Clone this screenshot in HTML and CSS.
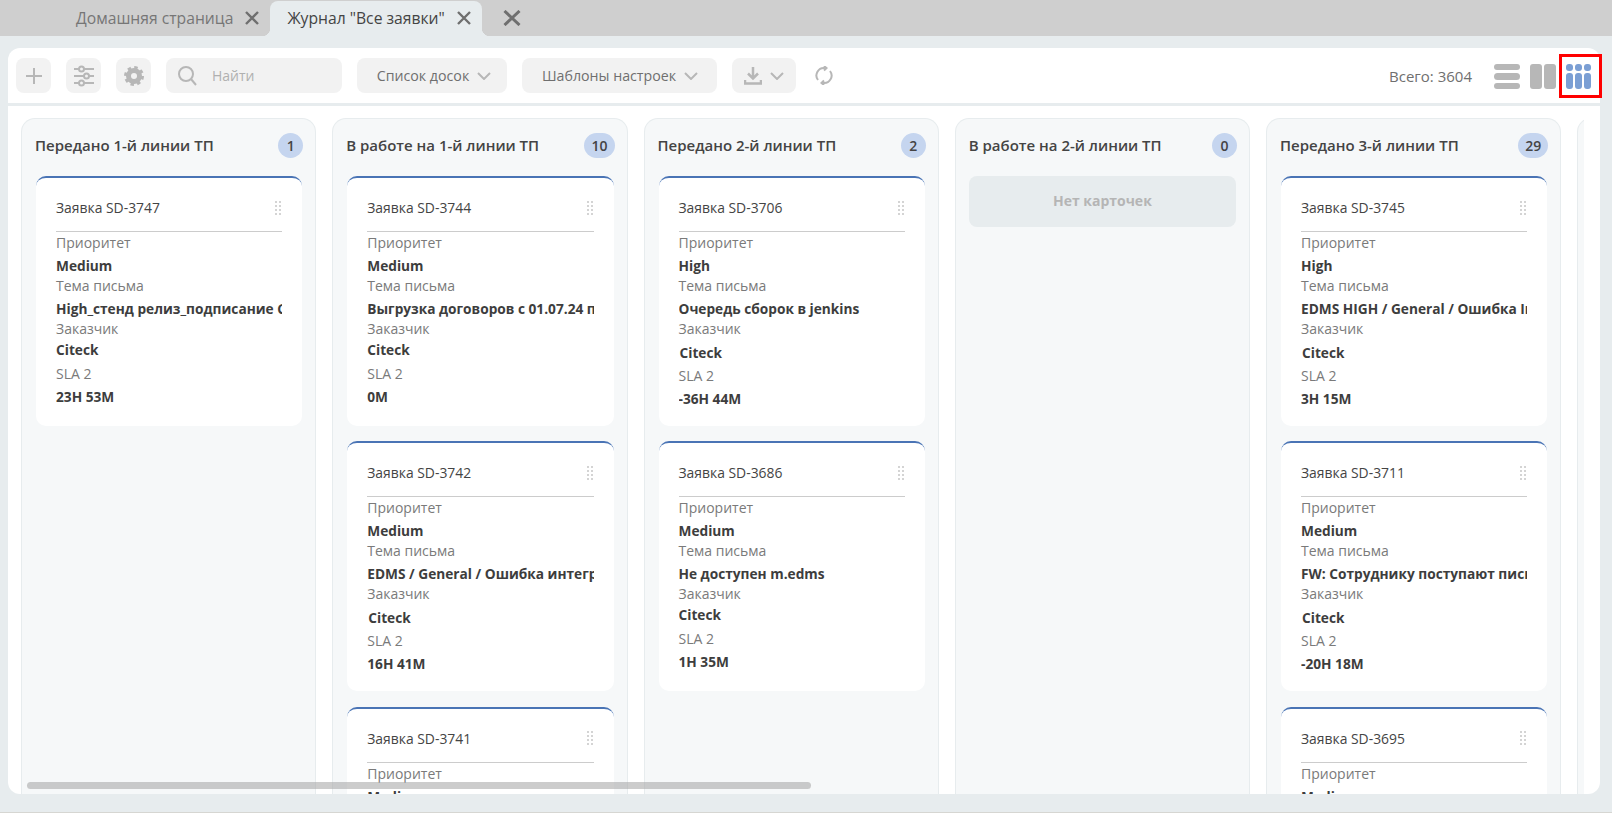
FILE: index.html
```html
<!DOCTYPE html>
<html lang="en">
<head>
    <meta charset="UTF-8">
    <title>Журнал "Все заявки"</title>
    <link rel="stylesheet" href="styles.css">
</head>
<body>
    <!-- Tabs -->
    <div class="tabs">
        <div class="tab">
            <span>Домашняя страница</span>
            <svg class="tab-x" viewBox="0 0 14 14"><path d="M1 1l12 12M13 1L1 13"/></svg>
        </div>
        <div class="tab tab-active">
            <span>Журнал "Все заявки"</span>
            <svg class="tab-x" viewBox="0 0 14 14"><path d="M1 1l12 12M13 1L1 13"/></svg>
        </div>
        <svg class="tabs-close" viewBox="0 0 18 16"><path d="M1.500 1l15 14M16.500 1l-15 14"/></svg>
    </div>

    <div class="panel">
        <!-- Toolbar -->
        <div class="toolbar">
            <button class="tool-btn">
                <svg class="ico" width="18" height="18" viewBox="0 0 18 18"><path d="M9 1v16M1 9h16"/></svg>
            </button>
            <button class="tool-btn">
                <svg class="ico" width="20" height="22" viewBox="0 0 20 22">
                    <path d="M0 4h5M10 4h10M0 11h10M15 11h5M0 18h5M10 18h10"/>
                    <circle cx="7.500" cy="4" r="2.500"/><circle cx="12.500" cy="11" r="2.500"/><circle cx="7.500" cy="18" r="2.500"/>
                </svg>
            </button>
            <button class="tool-btn">
                <svg width="20" height="20" viewBox="0 0 20 20">
                    <circle cx="10" cy="10" r="5.500" fill="none" stroke="#b7b7b7" stroke-width="5"/>
                    <circle cx="10" cy="10" r="8.500" fill="none" stroke="#b7b7b7" stroke-width="3" stroke-dasharray="3.400 3.270"/>
                </svg>
            </button>
            <div class="search">
                <svg class="ico" width="19" height="20" viewBox="0 0 19 20"><circle cx="8" cy="8" r="7"/><path d="M13 13l5 6"/></svg>
                <span>Найти</span>
            </div>
            <button class="tool-btn tool-select select-boards">
                Список досок
                <svg class="ico" width="14" height="8" viewBox="0 0 14 8"><path d="M1 1l6 6 6-6"/></svg>
            </button>
            <button class="tool-btn tool-select select-tpl">
                Шаблоны настроек
                <svg class="ico" width="14" height="8" viewBox="0 0 14 8"><path d="M1 1l6 6 6-6"/></svg>
            </button>
            <button class="tool-btn tool-select select-export">
                <svg class="ico ico-thick" width="18" height="19" viewBox="0 0 18 19"><path d="M9 1v11M4 7.500l5 5 5-5M1 14v3.500h16V14"/></svg>
                <svg class="ico" width="14" height="8" viewBox="0 0 14 8"><path d="M1 1l6 6 6-6"/></svg>
            </button>
            <svg class="ico refresh" width="18" height="19" viewBox="0 0 18 19">
                <path d="M3 14a7.500 7.500 0 0 1 7-12M15 5a7.500 7.500 0 0 1-7 12"/>
                <path d="M9 0l2.500 2L9 4.500M9 14.500L6.500 17 9 19"/>
            </svg>
            <div class="total">Всего: 3604</div>
            <div class="views">
                <div class="view view-list"><i></i><i></i><i></i></div>
                <div class="view view-two"><i></i><i></i></div>
                <div class="view view-three">
                    <i></i><i></i><i></i><i></i><i></i><i></i>
                    <div class="view-mark"></div>
                </div>
            </div>
        </div>

        <!-- Board -->
        <div class="board">
            <div class="column">
                <div class="column-head"><span>Передано 1-й линии ТП</span><b class="count">1</b></div>
                <div class="card">
                    <div class="card-head"><span>Заявка SD-3747</span><div class="drag"></div></div>
                    <div class="field">Приоритет</div><div class="value">Medium</div>
                    <div class="field">Тема письма</div><div class="value">High_стенд релиз_подписание Citeck</div>
                    <div class="field">Заказчик</div><div class="value value-tight">Citeck</div>
                    <div class="field field-sla">SLA 2</div><div class="value">23H 53M</div>
                </div>
            </div>

            <div class="column">
                <div class="column-head"><span>В работе на 1-й линии ТП</span><b class="count">10</b></div>
                <div class="card">
                    <div class="card-head"><span>Заявка SD-3744</span><div class="drag"></div></div>
                    <div class="field">Приоритет</div><div class="value">Medium</div>
                    <div class="field">Тема письма</div><div class="value">Выгрузка договоров с 01.07.24 по</div>
                    <div class="field">Заказчик</div><div class="value value-tight">Citeck</div>
                    <div class="field field-sla">SLA 2</div><div class="value">0M</div>
                </div>
                <div class="card">
                    <div class="card-head"><span>Заявка SD-3742</span><div class="drag"></div></div>
                    <div class="field">Приоритет</div><div class="value">Medium</div>
                    <div class="field">Тема письма</div><div class="value">EDMS / General / Ошибка интеграции</div>
                    <div class="field">Заказчик</div><div class="value value-low">Citeck</div>
                    <div class="field field-sla">SLA 2</div><div class="value">16H 41M</div>
                </div>
                <div class="card">
                    <div class="card-head"><span>Заявка SD-3741</span><div class="drag"></div></div>
                    <div class="field">Приоритет</div><div class="value">Medium</div>
                </div>
            </div>

            <div class="column">
                <div class="column-head"><span>Передано 2-й линии ТП</span><b class="count">2</b></div>
                <div class="card">
                    <div class="card-head"><span>Заявка SD-3706</span><div class="drag"></div></div>
                    <div class="field">Приоритет</div><div class="value">High</div>
                    <div class="field">Тема письма</div><div class="value">Очередь сборок в jenkins</div>
                    <div class="field">Заказчик</div><div class="value value-low">Citeck</div>
                    <div class="field field-sla">SLA 2</div><div class="value">-36H 44M</div>
                </div>
                <div class="card">
                    <div class="card-head"><span>Заявка SD-3686</span><div class="drag"></div></div>
                    <div class="field">Приоритет</div><div class="value">Medium</div>
                    <div class="field">Тема письма</div><div class="value">Не доступен m.edms</div>
                    <div class="field">Заказчик</div><div class="value value-tight">Citeck</div>
                    <div class="field field-sla">SLA 2</div><div class="value">1H 35M</div>
                </div>
            </div>

            <div class="column">
                <div class="column-head"><span>В работе на 2-й линии ТП</span><b class="count">0</b></div>
                <div class="no-cards">Нет карточек</div>
            </div>

            <div class="column">
                <div class="column-head"><span>Передано 3-й линии ТП</span><b class="count">29</b></div>
                <div class="card">
                    <div class="card-head"><span>Заявка SD-3745</span><div class="drag"></div></div>
                    <div class="field">Приоритет</div><div class="value">High</div>
                    <div class="field">Тема письма</div><div class="value">EDMS HIGH / General / Ошибка Integration</div>
                    <div class="field">Заказчик</div><div class="value value-low">Citeck</div>
                    <div class="field field-sla">SLA 2</div><div class="value">3H 15M</div>
                </div>
                <div class="card">
                    <div class="card-head"><span>Заявка SD-3711</span><div class="drag"></div></div>
                    <div class="field">Приоритет</div><div class="value">Medium</div>
                    <div class="field">Тема письма</div><div class="value">FW: Сотруднику поступают письма</div>
                    <div class="field">Заказчик</div><div class="value value-low">Citeck</div>
                    <div class="field field-sla">SLA 2</div><div class="value">-20H 18M</div>
                </div>
                <div class="card">
                    <div class="card-head"><span>Заявка SD-3695</span><div class="drag"></div></div>
                    <div class="field">Приоритет</div><div class="value">Medium</div>
                </div>
            </div>

            <div class="column"></div>
        </div>

        <div class="scrollbar"></div>
    </div>
</body>
</html>
```

FILE: styles.css
```css
html, body {
    height: 100%;
}

body {
    box-sizing: border-box;
    margin: 0;
    overflow: hidden;
    background-color: #e7ecee;
    border-bottom: 1px solid #d6d6d2;
    color: #444;
    font-family: "Open Sans", sans-serif;
    font-size: 14px;
}

/* Tabs */
.tabs {
    display: flex;
    align-items: center;
    height: 36px;
    padding-left: 60px;
    background-color: #cfcfcf;
}

.tab {
    display: flex;
    align-items: center;
    box-sizing: border-box;
    height: 36px;
    padding: 0 11px 0 16px;
    color: #767676;
    font-size: 15.700px;
    white-space: nowrap;
}

.tab-active {
    position: relative;
    width: 212px;
    height: 35px;
    margin-top: 1px;
    padding-bottom: 2px;
    padding-left: 17px;
    background-color: #e7ecee;
    border-radius: 8px 8px 0 0;
    color: #444;
}

/* inward curves at the bottom of the active tab */
.tab-active::before,
.tab-active::after {
    content: "";
    position: absolute;
    bottom: 0;
    width: 8px;
    height: 8px;
}

.tab-active::before {
    left: -8px;
    background-image: radial-gradient(circle at 0 0, transparent 8px, #e7ecee 8.500px);
}

.tab-active::after {
    right: -8px;
    background-image: radial-gradient(circle at 100% 0, transparent 8px, #e7ecee 8.500px);
}

.tab-x {
    flex: none;
    width: 14px;
    height: 14px;
    margin-left: 12px;
    fill: none;
    stroke: #6f6f6f;
    stroke-width: 2.4;
}

.tabs-close {
    width: 18px;
    height: 16px;
    margin-left: 21px;
    fill: none;
    stroke: #6f6f6f;
    stroke-width: 3;
}

/* Main panel */
.panel {
    position: relative;
    display: flex;
    flex-direction: column;
    box-sizing: border-box;
    height: 746px;
    margin: 12px 12px 0 8px;
    background-color: #fff;
    border-radius: 12px;
}

.toolbar {
    display: flex;
    align-items: center;
    flex: none;
    box-sizing: border-box;
    height: 58px;
    padding: 0 9px 0 8px;
    border-bottom: 3px solid #e7ecee;
}

.tool-btn {
    display: flex;
    align-items: center;
    justify-content: center;
    flex: none;
    box-sizing: border-box;
    width: 35px;
    height: 35px;
    margin-right: 15px;
    padding: 0;
    background-color: #f2f2f2;
    border: none;
    border-radius: 8px;
    color: #6f6f6f;
    font-family: inherit;
    font-size: 14.200px;
    font-weight: 500;
}

.ico {
    fill: none;
    stroke: #b7b7b7;
    stroke-width: 2;
}

.ico-thick {
    stroke-width: 2.500;
}

.search {
    display: flex;
    align-items: center;
    box-sizing: border-box;
    width: 176px;
    height: 35px;
    margin-right: 15px;
    padding-left: 12px;
    background-color: #f2f2f2;
    border-radius: 8px;
    color: #b0b0b0;
    font-size: 14px;
    font-weight: 500;
}

.search span {
    margin-left: 15px;
}

.tool-select {
    gap: 8px;
}

.select-boards {
    width: 150px;
    padding-left: 4px;
}

.select-tpl {
    width: 195px;
    padding-left: 1px;
}

.select-export {
    width: 64px;
    margin-right: 19px;
}

.refresh {
    flex: none;
}

.total {
    margin-left: auto;
    margin-right: 22px;
    color: #6f6f6f;
    font-size: 15px;
    font-weight: 500;
}

.views {
    display: flex;
    align-items: center;
    gap: 10px;
    margin-top: 2px;
}

.view {
    display: grid;
    width: 26px;
    height: 25px;
    gap: 3px;
}

.view i {
    background-color: #b7b7b7;
    border-radius: 3px;
}

.view-list {
    grid-template-rows: repeat(3, 1fr);
}

.view-list i {
    border-radius: 4px;
}

.view-two {
    grid-template-columns: repeat(2, 1fr);
    gap: 2px;
}

.view-three {
    position: relative;
    width: 25px;
    grid-template-columns: repeat(3, 1fr);
    grid-template-rows: 7px 1fr;
    gap: 2px;
}

.view-three i {
    background-color: #7b9fd4;
}

/* red frame around the selected view */
.view-mark {
    position: absolute;
    left: -7px;
    top: -10px;
    box-sizing: border-box;
    width: 43px;
    height: 44px;
    border: 3px solid #f00;
}

/* Board */
.board {
    display: flex;
    flex: 1;
    gap: 16px;
    min-height: 0;
    margin-right: 16px;
    padding: 12px 0 0 13px;
    border-radius: 0 0 0 12px;
    overflow: hidden;
}

.column {
    flex: none;
    box-sizing: border-box;
    width: 295.250px;
    padding: 0 13px;
    background-color: #f6f8f9;
    border: 1px solid #e7ecee;
    border-bottom: none;
    border-radius: 14px 14px 0 0;
}

.column-head {
    display: flex;
    align-items: center;
    justify-content: space-between;
    height: 52px;
    margin-right: -1px;
    font-size: 15px;
    font-weight: 600;
}

.count {
    display: flex;
    align-items: center;
    justify-content: center;
    box-sizing: border-box;
    min-width: 25px;
    height: 25px;
    padding: 0 7px;
    background-color: #c5d5ef;
    border-radius: 13px;
    font-size: 14px;
    font-weight: 600;
}

.card {
    height: 250px;
    box-sizing: border-box;
    margin: 5px 0 15.400px 1px;
    padding: 0 20px;
    background-color: #fff;
    border-top: 2px solid #4a74b5;
    border-radius: 10px;
    overflow: hidden;
}

.card-head {
    display: flex;
    align-items: center;
    justify-content: space-between;
    box-sizing: border-box;
    height: 54px;
    padding-top: 6px;
    border-bottom: 1px solid #ccc;
    font-size: 13.900px;
    font-weight: 500;
}

.drag {
    width: 8px;
    height: 16px;
    background-image: radial-gradient(#d4d4d4 1.100px, transparent 1.400px);
    background-size: 4px 4px;
}

.field {
    height: 22px;
    color: #7a7a7a;
    font-size: 14px;
    line-height: 22px;
}

.value {
    height: 20px;
    margin-top: 1px;
    color: #3d3d3d;
    font-size: 13.700px;
    font-weight: 700;
    line-height: 21px;
    white-space: nowrap;
    overflow: hidden;
}

.value-low {
    margin-bottom: -1px;
    padding: 1px 0 0 1px;
}

.value-tight {
    margin-top: -1px;
    margin-bottom: 1px;
}

.field-sla {
    margin-top: 4px;
}

.no-cards {
    height: 51px;
    margin-top: 5px;
    background-color: #e7ecee;
    border-radius: 8px;
    color: #b5b5b5;
    font-size: 14px;
    font-weight: 700;
    line-height: 49px;
    text-align: center;
}

/* Overlay scrollbar */
.scrollbar {
    position: absolute;
    left: 19px;
    bottom: 5px;
    width: 784px;
    height: 7px;
    background-color: rgba(170, 170, 170, 0.6);
    border-radius: 4px;
}
```
